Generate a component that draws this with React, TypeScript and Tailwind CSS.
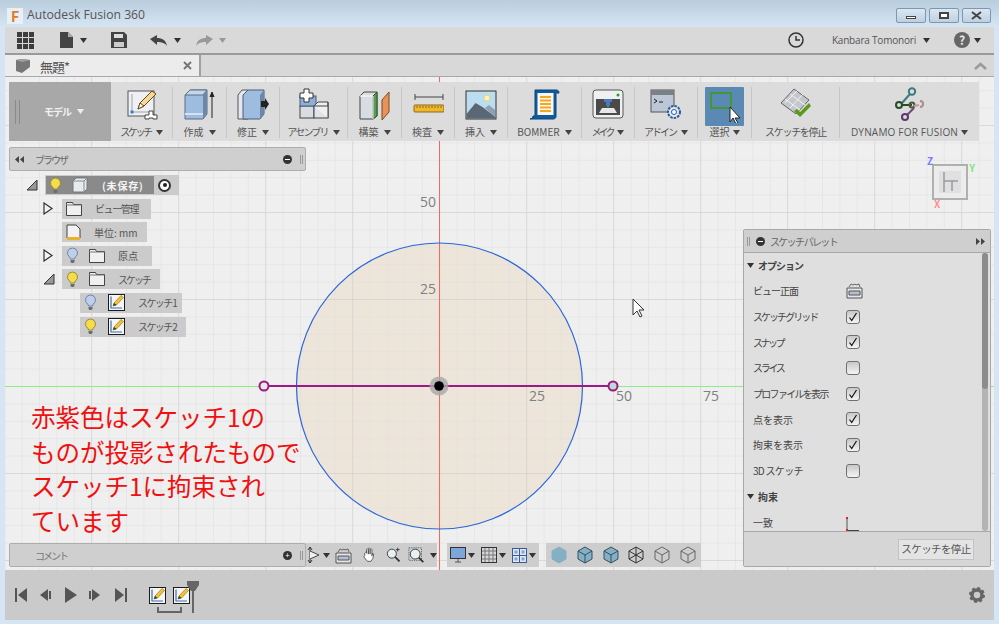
import type { ReactNode } from "react";

const Caret = ({ color = "#333" }: { color?: string }) => (
  <svg width="7" height="5" viewBox="0 0 7 5" className="shrink-0">
    <path d="M0 0h7L3.5 5z" fill={color} />
  </svg>
);

const Bulb = ({ on }: { on: boolean }) => (
  <svg width="13" height="17" viewBox="0 0 13 17" className="shrink-0">
    <path d="M6.5 1a5 5 0 0 0-3 9c.7.6.9 1.2 1 2h4c.1-.8.3-1.400 1-2a5 5 0 0 0-3-9z" fill={on ? "#f5dc4a" : "#bcd0ec"} stroke={on ? "#9a8a38" : "#6f84a8"} />
    <path d="M4.500 13h4v2l-1 1h-2l-1-1z" fill="#6d6d6d" />
  </svg>
);

const Folder = () => (
  <svg width="16" height="14" viewBox="0 0 16 14" className="shrink-0">
    <path d="M.5 2.500V.5h6l1 2h8v11H.5z" fill="#f0f0f0" stroke="#444" />
    <path d="M.5 3h15" stroke="#777" />
  </svg>
);

const SketchMini = ({ size = 17 }: { size?: number }) => (
  <svg width={size} height={size} viewBox="0 0 17 17" className="shrink-0">
    <rect x=".5" y=".5" width="16" height="16" fill="#f4f6f8" stroke="#1c1c1c" />
    <path d="M3 2.500v11.500h11" fill="none" stroke="#3a6fb5" strokeWidth="1.200" />
    <path d="M5 12l1-3 7-7.500 2.500 2L8.500 11z" fill="#f2c230" stroke="#8a6a10" strokeWidth=".6" />
    <path d="M5 12l1-3 2.500 2z" fill="#333" />
  </svg>
);

const Check = ({ on }: { on: boolean }) => (
  <span className="flex h-[14px] w-[14px] items-center justify-center rounded-[3px] border-[1.500px] border-[#707070] bg-gradient-to-b from-[#c8c8c8] to-[#f4f4f4]">
    {on && (
      <svg width="10" height="10" viewBox="0 0 10 10">
        <path d="M1.500 5.500l2.200 3L8.500 1" fill="none" stroke="#111" strokeWidth="1.200" />
      </svg>
    )}
  </span>
);

const ViewFront = () => (
  <svg width="17" height="17" viewBox="0 0 17 17">
    <path d="M1 6h15v10H1z" fill="#e4e6ea" stroke="#555" />
    <path d="M3 9h11v4H3z" fill="#b4c0d2" stroke="#555" />
    <path d="M3 5l2-3 2 1 2-1 1 1 3-1 1 3" fill="none" stroke="#666" />
  </svg>
);

const ribbonIcons: Record<string, ReactNode> = {
  sketch: (
    <svg width="32" height="32" viewBox="0 0 32 32">
      <rect x="2" y="3" width="26" height="25" fill="#eef0f3" stroke="#555" />
      <path d="M6 6v18h18" fill="none" stroke="#9aa3ad" />
      <rect x="4.500" y="22.500" width="3" height="3" fill="#2f7fd6" />
      <path d="M12 21l2-6 12-12 4 3-12 12z" fill="#f5d89a" stroke="#6a4a10" />
      <path d="M12 21l2-6 4 3z" fill="#fff" stroke="#6a4a10" />
      <path d="M19 27h4v-4h4v4h4v4h-4v-1h-4v1h-4z" fill="#fff" stroke="#444" />
    </svg>
  ),
  create: (
    <svg width="32" height="32" viewBox="0 0 32 32">
      <path d="M1 7l5-5h17v24l-4 5H1z" fill="#9dbcdf" stroke="#5a6e88" />
      <path d="M1 7l5-5h17l-4 5z" fill="#c4d6ea" stroke="#5a6e88" />
      <path d="M19 7l4-5v24l-4 5z" fill="#6c87a7" />
      <path d="M1 26h18" stroke="#d8e2ee" strokeWidth="2" />
      <path d="M28 30V6M26 9l2-5 2 5" fill="#222" stroke="#222" />
    </svg>
  ),
  modify: (
    <svg width="32" height="32" viewBox="0 0 32 32">
      <path d="M1 7l4-5h6v29H1z" fill="#e4e8ee" stroke="#555" />
      <path d="M6 7l5-5h16v24l-4 5H6z" fill="#9dbcdf" stroke="#4a5e78" />
      <path d="M23 7l4-5v24l-4 5z" fill="#6c87a7" />
      <path d="M24 13h4v-3l4 6-4 6v-3h-4z" fill="#222" />
    </svg>
  ),
  assemble: (
    <svg width="32" height="32" viewBox="0 0 32 32">
      <rect x="2" y="18" width="14" height="12" fill="#d8dde3" stroke="#444" />
      <rect x="2" y="8" width="16" height="10" fill="#8fb0d6" stroke="#4a5e78" />
      <rect x="16" y="18" width="14" height="12" fill="#e0e3e8" stroke="#444" />
      <path d="M16 18l4-4h10v16M30 14v4H16" fill="#eef0f2" stroke="#444" />
      <path d="M6 1h5v4h4v5h-4v4H6v-4H2V5h4z" fill="#fff" stroke="#333" />
    </svg>
  ),
  construct: (
    <svg width="32" height="32" viewBox="0 0 32 32">
      <path d="M1 8l4-4h13v24l-4 3H1z" fill="#d8dde3" stroke="#444" />
      <path d="M14 8l4-4v24l-4 3z" fill="#5a9a52" stroke="#2a5a2a" />
      <path d="M1 8h13v23" fill="none" stroke="#fff" />
      <path d="M23 12l7-8v20l-7 8z" fill="#e8935a" stroke="#7a4a20" />
    </svg>
  ),
  inspect: (
    <svg width="32" height="32" viewBox="0 0 32 32">
      <path d="M3 9h28M3 6v6M31 6v6" stroke="#444" fill="none" />
      <rect x="2" y="17" width="30" height="7" rx="1" fill="#f0b72a" stroke="#8a6a18" />
      <path d="M5 18v2M8 18v2M11 18v2M14 18v2M17 18v2M20 18v2M23 18v2M26 18v2M29 18v2" stroke="#8a6a18" />
    </svg>
  ),
  insert: (
    <svg width="32" height="32" viewBox="0 0 32 32">
      <rect x="1" y="3" width="30" height="28" fill="#bcdcef" stroke="#333" />
      <circle cx="22" cy="10" r="3" fill="#fff4c0" stroke="#e8d47a" />
      <path d="M1.500 26l9-11 7 4 13 10v1.500h-29z" fill="#5a6876" />
      <path d="M20 20l4-3 6 5v7z" fill="#8fa0b0" />
    </svg>
  ),
  bommer: (
    <svg width="32" height="32" viewBox="0 0 32 32">
      <path d="M6 2h21c2 0 3 1 3 3h-3v23c0 2-1 3-3 3H1c2 0 3-2 3-3h2z" fill="#0f5aa0" stroke="#0a4478" />
      <rect x="8.500" y="5" width="16" height="22" fill="#fdf8ee" />
      <path d="M11 9h11M11 12.500h11M11 16h11M11 19.500h11M11 23h11" stroke="#f5a623" strokeWidth="2" />
    </svg>
  ),
  make: (
    <svg width="32" height="32" viewBox="0 0 32 32">
      <rect x="1" y="2" width="30" height="28" rx="3" fill="#eef0f2" stroke="#555" />
      <rect x="4" y="11" width="24" height="16" fill="#4a4a4a" />
      <circle cx="26" cy="7" r="1.500" fill="#2a9a2a" />
      <path d="M12 11h8v3h-2v3l-2 3-2-3v-3h-2z" fill="#4a7ab8" />
      <path d="M7 25l3-5h12l3 5z" fill="#e6e6e6" />
    </svg>
  ),
  addin: (
    <svg width="32" height="32" viewBox="0 0 32 32">
      <rect x="1" y="2" width="23" height="22" fill="#bcc6d4" stroke="#555" />
      <rect x="1" y="2" width="23" height="5" fill="#7a7f88" />
      <path d="M4 11l3 2-3 2M9 14h4" fill="none" stroke="#222" />
      <circle cx="24" cy="24" r="6" fill="#dde7f5" stroke="#2f5a9a" strokeWidth="2" strokeDasharray="2.500 1" />
      <circle cx="24" cy="24" r="2.500" fill="#fff" stroke="#2f5a9a" />
    </svg>
  ),
  stop: (
    <svg width="32" height="32" viewBox="0 0 32 32">
      <path d="M1 15L14 1l15 11-13 14z" fill="#c4c8cc" stroke="#666" />
      <path d="M5 11l15 11M10 6l15 11M10 20L23 6M5 15L18 2" stroke="#f2f2f2" />
      <path d="M14 23l3-2 3 3 9-9 2 3-11 11z" fill="#5a9a1a" />
    </svg>
  ),
  dynamo: (
    <svg width="34" height="34" viewBox="0 0 34 34">
      <circle cx="19" cy="4.500" r="3.200" fill="none" stroke="#3a7a80" strokeWidth="2" />
      <path d="M17 7L9 16" stroke="#3a7a80" strokeWidth="2" />
      <circle cx="6" cy="18" r="3" fill="none" stroke="#2a4a2a" strokeWidth="2" />
      <path d="M9 18h10" stroke="#2a4a2a" strokeWidth="2" />
      <circle cx="19" cy="18" r="2.500" fill="none" stroke="#4a5a3a" strokeWidth="2" />
      <path d="M21 19l5-1" stroke="#c49a94" strokeWidth="2" />
      <path d="M27 14a3 3 0 1 1 0 6" fill="none" stroke="#b08a84" strokeWidth="2" />
      <path d="M21 21l-7 7" stroke="#6a4a7a" strokeWidth="2" />
      <circle cx="12" cy="30" r="3" fill="none" stroke="#5a3a6a" strokeWidth="2" />
    </svg>
  ),
};

const ribbon = [
  { icon: "sketch", label: "スケッチ", w: "w-[62px]", caret: true, track: "tracking-[-2.400px]" },
  { icon: "create", label: "作成", w: "w-[54px]", caret: true, track: "" },
  { icon: "modify", label: "修正", w: "w-[53px]", caret: true, track: "" },
  { icon: "assemble", label: "アセンブリ", w: "w-[68px]", caret: true, track: "tracking-[-1.800px]" },
  { icon: "construct", label: "構築", w: "w-[54px]", caret: true, track: "" },
  { icon: "inspect", label: "検査", w: "w-[53px]", caret: true, track: "" },
  { icon: "insert", label: "挿入", w: "w-[53px]", caret: true, track: "" },
  { icon: "bommer", label: "BOMMER", w: "w-[74px]", caret: true, track: "" },
  { icon: "make", label: "メイク", w: "w-[53px]", caret: true, track: "tracking-[-3px]" },
  { icon: "addin", label: "アドイン", w: "w-[63px]", caret: true, track: "tracking-[-2px]" },
];

function RibbonItem({ icon, label, w, caret, track }: { icon: string; label: string; w: string; caret: boolean; track: string }) {
  return (
    <div className={`${w} flex h-[51px] shrink-0 flex-col items-center justify-between border-r border-[#c6c6c6]`}>
      <div className="flex h-[34px] items-center">{ribbonIcons[icon]}</div>
      <div className="flex items-center gap-[5px] text-[10px] leading-[12px] text-[#555]">
        <span className={track}>{label}</span>
        {caret && <Caret color="#444" />}
      </div>
    </div>
  );
}

const tree = [
  { label: "ビュー管理", ml: "ml-[17px]", w: "w-[89px]", caret: "right", bulb: null, icon: "folder", track: "tracking-[-1.400px]", gap: "mr-[11px]" },
  { label: "単位: mm", ml: "ml-[17px]", w: "w-[85px]", caret: "", bulb: null, icon: "doc", track: "", gap: "mr-[11px]" },
  { label: "原点", ml: "ml-[17px]", w: "w-[90px]", caret: "right", bulb: false, icon: "folder", track: "", gap: "mr-[10px]" },
  { label: "スケッチ", ml: "ml-[17px]", w: "w-[98px]", caret: "down", bulb: true, icon: "folder", track: "tracking-[-2px]", gap: "mr-[10px]" },
  { label: "スケッチ 1", ml: "ml-[35px]", w: "w-[102px]", caret: "", bulb: false, icon: "sketch", track: "tracking-[-1.600px]", gap: "mr-[11px]" },
  { label: "スケッチ 2", ml: "ml-[35px]", w: "w-[106px]", caret: "", bulb: true, icon: "sketch", track: "tracking-[-1.600px]", gap: "mr-[11px]" },
];

const TreeCaret = ({ dir }: { dir: string }) => (
  <span className="flex w-[19px] shrink-0 justify-start">
    {dir === "right" && (
      <svg width="11" height="13" viewBox="0 0 11 13">
        <path d="M1 1l8 5.500L1 12z" fill="#f4f4f4" stroke="#333" strokeWidth="1.200" />
      </svg>
    )}
    {dir === "down" && (
      <svg width="12" height="12" viewBox="0 0 12 12">
        <path d="M11 1v10H1z" fill="#999" stroke="#333" />
      </svg>
    )}
  </span>
);

const palette = [
  { label: "ビュー正面", kind: "view", track: "tracking-[-1px]" },
  { label: "スケッチ グリッド", kind: "on", track: "tracking-[-2px]" },
  { label: "スナップ", kind: "on", track: "tracking-[-2.500px]" },
  { label: "スライス", kind: "off", track: "tracking-[-2.300px]" },
  { label: "プロファイルを表示", kind: "on", track: "tracking-[-1.700px]" },
  { label: "点を表示", kind: "on", track: "" },
  { label: "拘束を表示", kind: "on", track: "" },
  { label: "3D スケッチ", kind: "off", track: "tracking-[-0.700px]" },
];

const Cube = ({ variant }: { variant: number }) => {
  const solid = variant < 3;
  const fill = solid ? "#84afc4" : "none";
  const edge = variant === 0 ? "#84afc4" : variant < 3 ? "#35505e" : variant === 3 ? "#333" : "#666";
  return (
    <svg width="16" height="18" viewBox="0 0 16 18" className="shrink-0">
      <path d="M8 1l7 4v8l-7 4-7-4V5z" fill={fill} stroke={edge} />
      {variant !== 0 && <path d="M1 5l7 4 7-4M8 9v8" fill="none" stroke={edge} />}
      {variant === 3 && <path d="M8 1v8M1 13l7-4 7 4" fill="none" stroke={edge} />}
    </svg>
  );
};

const Transport = () => (
  <div className="flex items-center">
    <svg width="112" height="16" viewBox="0 0 112 16" fill="#555">
      <path d="M0 1h2v14H0zM12 1v14L3 8z" />
      <path d="M25 8l8-6v12zM34 4h2v8h-2z" />
      <path d="M50 0l12 8-12 8z" />
      <path d="M74 4h2v8h-2zM77 2l8 6-8 6z" />
      <path d="M100 1l9 7-9 7zM110 1h2v14h-2z" />
    </svg>
  </div>
);

export default function App() {
  return (
    <div className="flex h-[624px] w-[999px] flex-col overflow-hidden bg-[#d6e5f4] font-['Noto_Sans_CJK_JP','Noto_Sans',sans-serif] text-[#555]">
      {/* title bar */}
      <div className="flex h-[27px] shrink-0 items-center bg-gradient-to-b from-[#b9cddd] to-[#d6e5f3] pl-[7px] pr-[8px] pt-[4px]">
        <span className="flex h-[16px] w-[16px] items-center justify-center bg-[#e6f0f6] text-[14px] font-bold leading-none text-[#e07a1f]">F</span>
        <span className="ml-[4px] font-['Open_Sans',sans-serif] text-[12.200px] text-[#555]">Autodesk Fusion 360</span>
        <div className="ml-auto flex gap-[3px]">
          <div className="flex h-[15px] w-[30px] items-center justify-center rounded-[2px] border border-[#7d97b3] bg-gradient-to-b from-[#dbe7f2] to-[#bed0e0]">
            <span className="mt-[4px] h-[3px] w-[10px] border border-[#444] bg-white" />
          </div>
          <div className="flex h-[15px] w-[30px] items-center justify-center rounded-[2px] border border-[#7d97b3] bg-gradient-to-b from-[#dbe7f2] to-[#bed0e0]">
            <span className="h-[7px] w-[10px] border-2 border-[#444] bg-white" />
          </div>
          <div className="flex h-[15px] w-[29px] items-center justify-center rounded-[2px] border border-[#7d97b3] bg-gradient-to-b from-[#dbe7f2] to-[#bed0e0]">
            <svg width="11" height="9" viewBox="0 0 11 9">
              <path d="M1 1l9 7M10 1L1 8" stroke="#444" strokeWidth="2" />
            </svg>
          </div>
        </div>
      </div>

      <div className="mx-[5px] flex flex-1 flex-col">
        {/* app bar */}
        <div className="flex h-[28px] shrink-0 items-center border-b-2 border-[#9a9a9a] bg-[#d9d9d9] pl-[12px] pr-[13px]">
          <svg width="17" height="17" viewBox="0 0 17 17" fill="#3d3d3d">
            {[0, 6, 12].flatMap((y) => [0, 6, 12].map((x) => <rect key={`${x}-${y}`} x={x} y={y} width="5" height="5" />))}
          </svg>
          <svg className="ml-[26px]" width="13" height="16" viewBox="0 0 13 16">
            <path d="M0 0h8l5 5v11H0z" fill="#444" />
            <path d="M8 0v5h5" fill="#aaa" />
          </svg>
          <span className="ml-[7px]"><Caret /></span>
          <svg className="ml-[24px]" width="16" height="16" viewBox="0 0 16 16">
            <path d="M0 0h13l3 3v13H0z" fill="#444" />
            <rect x="3" y="2" width="9" height="4" fill="#ddd" />
            <rect x="3" y="10" width="10" height="5" fill="#ccc" />
          </svg>
          <svg className="ml-[23px]" width="17" height="11" viewBox="0 0 17 11">
            <path d="M0 4l7-4v3c5 0 9 2 10 8-2-3-5-4-10-4v3z" fill="#444" />
          </svg>
          <span className="ml-[7px]"><Caret /></span>
          <svg className="ml-[15px]" width="17" height="11" viewBox="0 0 17 11">
            <path d="M17 4l-7-4v3C5 3 1 5 0 11c2-3 5-4 10-4v3z" fill="#999" />
          </svg>
          <span className="ml-[6px]"><Caret color="#999" /></span>

          <svg className="ml-auto" width="16" height="16" viewBox="0 0 16 16">
            <circle cx="8" cy="8" r="7" fill="none" stroke="#333" strokeWidth="1.500" />
            <path d="M8 4v4h4" fill="none" stroke="#333" strokeWidth="1.500" />
          </svg>
          <span className="ml-[28px] font-['Open_Sans',sans-serif] text-[10px] tracking-[-0.200px] text-[#555]">Kanbara Tomonori</span>
          <span className="ml-[7px]"><Caret /></span>
          <span className="ml-[24px] flex h-[16px] w-[16px] items-center justify-center rounded-full bg-[#666] text-[12px] font-bold leading-none text-[#e8e8e8]">?</span>
          <span className="ml-[4px]"><Caret /></span>
        </div>

        {/* tab row */}
        <div className="flex h-[22px] shrink-0 border-b border-[#a8a8a8] bg-[#d8d8d8]">
          <div className="flex w-[196px] items-center border-r-2 border-[#a0a0a0] bg-[#ececec] pl-[10px] pr-[7px]">
            <svg width="16" height="15" viewBox="0 0 16 15">
              <path d="M1 2l6-1 8 1v7l-8 6-6-2z" fill="#777" />
              <path d="M1 2l6 2 8-2-8-1z" fill="#a0a0a0" />
            </svg>
            <span className="ml-[9px] mt-[2px] text-[13px] leading-none tracking-[-1px] text-[#555]">無題*</span>
            <svg className="ml-auto" width="9" height="9" viewBox="0 0 9 9">
              <path d="M1 1l7 7M8 1L1 8" stroke="#777" strokeWidth="2" />
            </svg>
          </div>
          <svg className="my-auto ml-auto mr-[7px]" width="13" height="8" viewBox="0 0 13 8">
            <path d="M1 7l5.500-5L12 7" fill="none" stroke="#999" strokeWidth="2.500" />
          </svg>
        </div>

        {/* canvas */}
        <div className="relative flex-1 bg-[#efefef]">
          <svg className="absolute inset-0 h-full w-full" viewBox="5 77 989 493">
            <defs>
              <pattern id="minor" x="4.200" y="38" width="17.400" height="17.400" patternUnits="userSpaceOnUse">
                <path d="M0 0v17.400M0 0h17.400" stroke="#dedede" fill="none" />
              </pattern>
              <pattern id="major" x="4.200" y="38" width="87" height="87" patternUnits="userSpaceOnUse">
                <path d="M0 0v87M0 0h87" stroke="#cbcbcb" fill="none" />
              </pattern>
            </defs>
            <circle cx="439" cy="386" r="143" fill="#ede5da" />
            <rect x="5" y="77" width="989" height="493" fill="url(#minor)" />
            <rect x="5" y="77" width="989" height="493" fill="url(#major)" />
            <path d="M439.500 77v493" stroke="#ee6a62" />
            <path d="M5 386.500h989" stroke="#8fea88" />
            <circle cx="439.500" cy="386" r="143" fill="none" stroke="#2a66d9" strokeWidth="1.200" />
            <path d="M264 386h349" stroke="#9a1a8a" strokeWidth="2" />
            <circle cx="264" cy="386" r="4.500" fill="#e8e8e8" stroke="#a01a7a" strokeWidth="2" />
            <circle cx="613" cy="386" r="4.500" fill="#bcd8e0" stroke="#a01a7a" strokeWidth="2" />
            <circle cx="439" cy="386" r="9.500" fill="#a8a8a8" fillOpacity=".8" />
            <circle cx="439" cy="386" r="4.800" fill="#000" />
            <g fill="#808080" fontSize="14" fontFamily="'Open Sans', sans-serif">
              <text x="420" y="207">50</text>
              <text x="420" y="294">25</text>
              <text x="529" y="401">25</text>
              <text x="616" y="401">50</text>
              <text x="703" y="401">75</text>
            </g>
            <path d="M633 299v16l4-4 3 6 2-1-3-6h5z" fill="#fff" stroke="#333" />
          </svg>

          {/* view cube */}
          <div className="absolute left-[927px] top-[87px] flex h-[36px] w-[36px] items-center justify-center border-2 border-[#b0b0b0] bg-[#ececec]">
            <svg width="22" height="22" viewBox="0 0 22 22">
              <rect width="22" height="22" fill="#e0e0e2" />
              <path d="M5 1v20M5 10h14M13 10v10" fill="none" stroke="#9a9a9a" strokeWidth="1.500" />
            </svg>
            <span className="absolute -left-[7px] -top-[10px] text-[10px] font-bold leading-none text-[#7a7aff]">Z</span>
            <span className="absolute -right-[9px] -top-[3px] text-[10px] font-bold leading-none text-[#7ae87a]">Y</span>
            <span className="absolute -bottom-[11px] left-[0px] text-[10px] font-bold leading-none text-[#ff9090]">X</span>
          </div>

          {/* ribbon */}
          <div className="absolute left-[4px] top-[5px] flex h-[59px] w-[970px] items-start bg-[#dcdcdc]">
            <div className="flex h-full w-[102px] shrink-0 items-center bg-[#a8a8a8] pl-[6px]">
              <span className="h-[24px] w-[5px] border-x border-[#8a8a8a]" />
              <span className="ml-[24px] flex items-center gap-[6px] text-[10px] font-bold text-[#f0f0f0]">
                <span className="tracking-[-1px]">モデル</span> <Caret color="#eee" />
              </span>
            </div>
            <div className="flex pt-[5px]">
              {ribbon.map((r) => (
                <RibbonItem key={r.label} {...r} />
              ))}
              <div className="flex h-[51px] w-[54px] shrink-0 flex-col items-center justify-between border-r border-[#c6c6c6]">
                <div className="flex h-[39px] w-[39px] items-center justify-center rounded-[1px] bg-[#5a8ab4]">
                  <svg width="32" height="32" viewBox="0 0 32 32">
                    <rect x="2" y="2" width="20" height="15" fill="none" stroke="#3f9a10" strokeWidth="1.500" />
                    <path d="M21 16v15l3-4 3 6 2-1-3-5h5z" fill="#fff" stroke="#222" />
                  </svg>
                </div>
                <div className="flex items-center gap-[3px] text-[10px] leading-[12px] text-[#555]">
                  選択 <Caret color="#444" />
                </div>
              </div>
              <RibbonItem icon="stop" label="スケッチを停止" w="w-[88px]" caret={false} track="tracking-[-1.300px]" />
              <div className="flex h-[51px] w-[139px] flex-col items-center justify-between">
                <div className="flex h-[34px] items-center">{ribbonIcons.dynamo}</div>
                <div className="flex items-center gap-[3px] font-['Open_Sans',sans-serif] text-[10px] leading-[12px] tracking-[0.200px] text-[#555]">
                  DYNAMO FOR FUSION <Caret color="#444" />
                </div>
              </div>
            </div>
          </div>

          {/* browser */}
          <div className="absolute left-[4px] top-[70px] flex h-[24px] w-[297px] items-center rounded-[2px] border border-[#adadad] bg-[#cfcfcf] pl-[5px] pr-[2px]">
            <svg width="9" height="7" viewBox="0 0 9 7" fill="#444">
              <path d="M4 0v7L0 3.500zM9 0v7L5 3.500z" />
            </svg>
            <span className="ml-[11px] text-[10px] tracking-[-2px] text-[#666]">ブラウザ</span>
            <span className="ml-auto flex h-[9px] w-[9px] items-center justify-center rounded-full bg-[#333]">
              <span className="h-[1px] w-[5px] bg-white" />
            </span>
            <span className="ml-[8px] h-[9px] w-[3px] border-x border-[#999]" />
          </div>

          {/* tree */}
          <div className="absolute left-[21px] top-[98px] flex flex-col gap-[3.600px] text-[10px] text-[#555]">
            <div className="flex h-[20px] items-center">
              <TreeCaret dir="down" />
              <div className="flex h-[20px] w-[134px] items-center bg-[#cbcbcb] p-[1px]">
                <div className="flex h-[18px] w-[108px] items-center bg-[#8a8a8a] pl-[3px] text-[#f4f4f4]">
                  <Bulb on />
                  <span className="ml-[10px]"><svg width="16" height="16" viewBox="0 0 16 16"><path d="M1 4l3-3h11v11l-3 3H1z" fill="#e8ebee" stroke="#777" /><path d="M1 4h11v11M12 4l3-3" fill="none" stroke="#888" /></svg></span>
                  <span className="ml-[14px] font-bold tracking-[0.800px]">(未保存)</span>
                </div>
                <span className="ml-[4px] flex h-[13px] w-[13px] items-center justify-center rounded-full border-2 border-[#333] bg-white">
                  <span className="h-[4px] w-[4px] rounded-full bg-[#222]" />
                </span>
              </div>
            </div>
            {tree.map((t) => (
              <div key={t.label} className={`${t.ml} flex h-[20px] items-center`}>
                <TreeCaret dir={t.caret} />
                <div className={`${t.w} flex h-[20px] items-center bg-[#cbcbcb] pl-[4px]`}>
                  {t.bulb !== null && <span className={t.gap}><Bulb on={t.bulb} /></span>}
                  {t.icon === "folder" && <Folder />}
                  {t.icon === "doc" && (
                    <svg width="15" height="17" viewBox="0 0 15 17" className="shrink-0">
                      <path d="M1 1h9l4 4v9H1z" fill="#f2f2f2" stroke="#444" />
                      <rect x="1" y="13" width="13" height="3" fill="#e8b32a" />
                    </svg>
                  )}
                  {t.icon === "sketch" && <SketchMini />}
                  <span className={`ml-[13px] whitespace-nowrap ${t.track}`}>{t.label}</span>
                </div>
              </div>
            ))}
          </div>

          {/* sketch palette */}
          <div className="absolute left-[738px] top-[152px] flex h-[338px] w-[248px] flex-col rounded-[2px] border border-[#a8a8a8] bg-[#dfdfdf]">
            <div className="flex h-[23px] shrink-0 items-center border-b border-[#a8a8a8] bg-[#cfcfcf] pl-[3px] pr-[5px]">
              <span className="h-[9px] w-[3px] border-x border-[#999]" />
              <span className="ml-[6px] flex h-[9px] w-[9px] items-center justify-center rounded-full bg-[#333]">
                <span className="h-[1px] w-[5px] bg-white" />
              </span>
              <span className="ml-[5px] text-[10px] tracking-[-1.700px] text-[#666]">スケッチ パレット</span>
              <svg className="ml-auto" width="9" height="7" viewBox="0 0 9 7" fill="#444">
                <path d="M0 0v7l4-3.500zM5 0v7l4-3.500z" />
              </svg>
            </div>
            <div className="relative h-[278px] shrink-0 overflow-hidden pl-[3px] text-[10px] text-[#444]">
              <div className="flex h-[25px] items-center gap-[4px] font-bold">
                <Caret />
                <span className="tracking-[-1px]">オプション</span>
              </div>
              {palette.map((p) => (
                <div key={p.label} className="flex h-[25.700px] items-center pl-[6px]">
                  <span className={`w-[93px] whitespace-nowrap ${p.track}`}>{p.label}</span>
                  {p.kind === "view" ? <ViewFront /> : <Check on={p.kind === "on"} />}
                </div>
              ))}
              <div className="flex h-[26px] items-center gap-[4px] font-bold">
                <Caret />
                拘束
              </div>
              <div className="flex h-[25.700px] items-center pl-[6px]">
                <span className="w-[93px]">一致</span>
                <svg width="14" height="16" viewBox="0 0 14 16" className="mt-[6px]">
                  <path d="M1 1v11" stroke="#555" />
                  <path d="M1 13.500h12" stroke="#444" />
                  <rect x="0" y="0" width="2" height="2" fill="#e02020" />
                  <rect x="0" y="12" width="2" height="2" fill="#e02020" />
                </svg>
              </div>
              <div className="absolute right-[2px] top-0 h-full w-[6px] rounded-[3px] bg-[#b4b4b4]">
                <div className="h-[136px] rounded-[3px] bg-[#8c8c8c]" />
              </div>
            </div>
            <div className="flex flex-1 items-center justify-end border-t border-[#a8a8a8] bg-[#d6d6d6] pr-[16px]">
              <span className="flex h-[21px] w-[76px] items-center justify-center border border-[#c2c2c2] bg-[#e4e4e4] text-[10.500px] tracking-[-0.600px] text-[#555]">スケッチを停止</span>
            </div>
          </div>

          {/* nav toolbars */}
          <div className="absolute left-[300px] top-[466px] flex items-start">
            <div className="flex h-[24px] w-[132px] items-center bg-[#cdcdcd]">
              <svg width="16" height="18" viewBox="0 0 16 18" className="shrink-0">
                <path d="M5 1v16M3 4l2-3 2 3M3 14l2 3 2-3" fill="none" stroke="#333" />
                <path d="M5 5l9 4-9 4" fill="#eef0f3" stroke="#444" />
              </svg>
              <span className="ml-[2px]"><Caret /></span>
              <span className="ml-[5px]"><ViewFront /></span>
              <svg className="ml-[10px]" width="16" height="16" viewBox="0 0 16 16">
                <path d="M3 9V6l1-1 1 1V2l1-1 1 1v5V1l1-1 1 1v6-5l1-1 1 1v7l1-3 1 1-1 5-2 3H6L2 10z" fill="#fff" stroke="#333" strokeWidth=".8" />
              </svg>
              <svg className="ml-[10px]" width="16" height="16" viewBox="0 0 16 16">
                <circle cx="6.500" cy="6.500" r="5" fill="#e8f0f4" stroke="#333" />
                <path d="M10 10l5 5" stroke="#333" strokeWidth="2" />
                <path d="M11 2h4M13 0v4" stroke="#333" />
              </svg>
              <svg className="ml-[7px]" width="18" height="18" viewBox="0 0 18 18">
                <rect x="1" y="1" width="14" height="14" fill="none" stroke="#666" strokeDasharray="1.500 1" />
                <circle cx="8" cy="8" r="5.500" fill="#e8f0f4" stroke="#333" />
                <path d="M12 12l5 5" stroke="#333" strokeWidth="2" />
              </svg>
              <span className="ml-[6px]"><Caret /></span>
            </div>
            <div className="ml-[10px] flex h-[24px] w-[92px] items-center bg-[#cdcdcd] pl-[3px]">
              <svg width="16" height="16" viewBox="0 0 16 16">
                <rect x=".5" y=".5" width="15" height="11" fill="#7ea6d8" stroke="#333" />
                <path d="M5 15h6M8 12v3" stroke="#555" />
              </svg>
              <span className="ml-[2px]"><Caret /></span>
              <svg className="ml-[6px]" width="16" height="16" viewBox="0 0 16 16">
                <rect x=".5" y=".5" width="15" height="15" fill="#d6d6dc" stroke="#333" />
                <path d="M4 1v14M8 1v14M12 1v14M1 4h14M1 8h14M1 12h14" stroke="#777" />
              </svg>
              <span className="ml-[2px]"><Caret /></span>
              <svg className="ml-[6px]" width="15" height="15" viewBox="0 0 15 15">
                <rect x=".5" y=".5" width="14" height="14" fill="#e0e6f0" stroke="#3a5a9a" />
                <path d="M7.500 1v13M1 7.500h13" stroke="#3a5a9a" />
                <rect x="2.500" y="2.500" width="3" height="3" fill="#7ea6d8" />
                <rect x="9.500" y="2.500" width="3" height="3" fill="#7ea6d8" />
                <rect x="2.500" y="9.500" width="3" height="3" fill="#7ea6d8" />
                <rect x="9.500" y="9.500" width="3" height="3" fill="#7ea6d8" />
              </svg>
              <span className="ml-[2px]"><Caret /></span>
            </div>
            <div className="ml-[7px] flex h-[24px] w-[155px] items-center justify-between bg-[#cdcdcd] px-[5px]">
              {[0, 1, 2, 3, 4, 5].map((v) => (
                <Cube key={v} variant={v} />
              ))}
            </div>
          </div>

          {/* comment */}
          <div className="absolute left-[4px] top-[466px] flex h-[24px] w-[297px] items-center rounded-[2px] border border-[#adadad] bg-[#cfcfcf] pr-[2px]">
            <span className="ml-[25px] text-[10px] tracking-[-2px] text-[#777]">コメント</span>
            <span className="ml-auto flex h-[9px] w-[9px] items-center justify-center rounded-full bg-[#333] text-[8px] leading-none text-white">+</span>
            <span className="ml-[8px] h-[9px] w-[3px] border-x border-[#999]" />
          </div>

          {/* annotation */}
          <div className="absolute left-[26px] top-[323px] text-[24.500px] leading-[34.500px] text-[#f01010]">
            赤紫色はスケッチ1の
            <br />
            ものが投影されたもので
            <br />
            スケッチ1に拘束され
            <br />
            ています
          </div>
        </div>

        {/* timeline */}
        <div className="flex h-[50px] shrink-0 items-center bg-[#cacaca] pl-[10px] pr-[9px]">
          <Transport />
          <div className="relative ml-[22px] flex gap-[7px]">
            <SketchMini />
            <SketchMini />
            <div className="absolute left-[8px] top-[20px] h-[6px] w-[25px] border-x-2 border-b-2 border-[#666]" />
            <div className="absolute -right-[9px] -top-[6px] flex flex-col items-center">
              <svg width="12" height="10" viewBox="0 0 12 10"><path d="M0 0h12v4L8 10H4L0 4z" fill="#666" /></svg>
              <span className="h-[22px] w-[2px] bg-[#666]" />
            </div>
          </div>
          <svg className="ml-auto" width="16" height="16" viewBox="0 0 16 16">
            <circle cx="8" cy="8" r="5" fill="none" stroke="#666" strokeWidth="3.500" />
            <circle cx="8" cy="8" r="7" fill="none" stroke="#666" strokeWidth="2" strokeDasharray="3 2.500" />
          </svg>
        </div>
      </div>
      <div className="h-[4px] shrink-0" />
    </div>
  );
}
